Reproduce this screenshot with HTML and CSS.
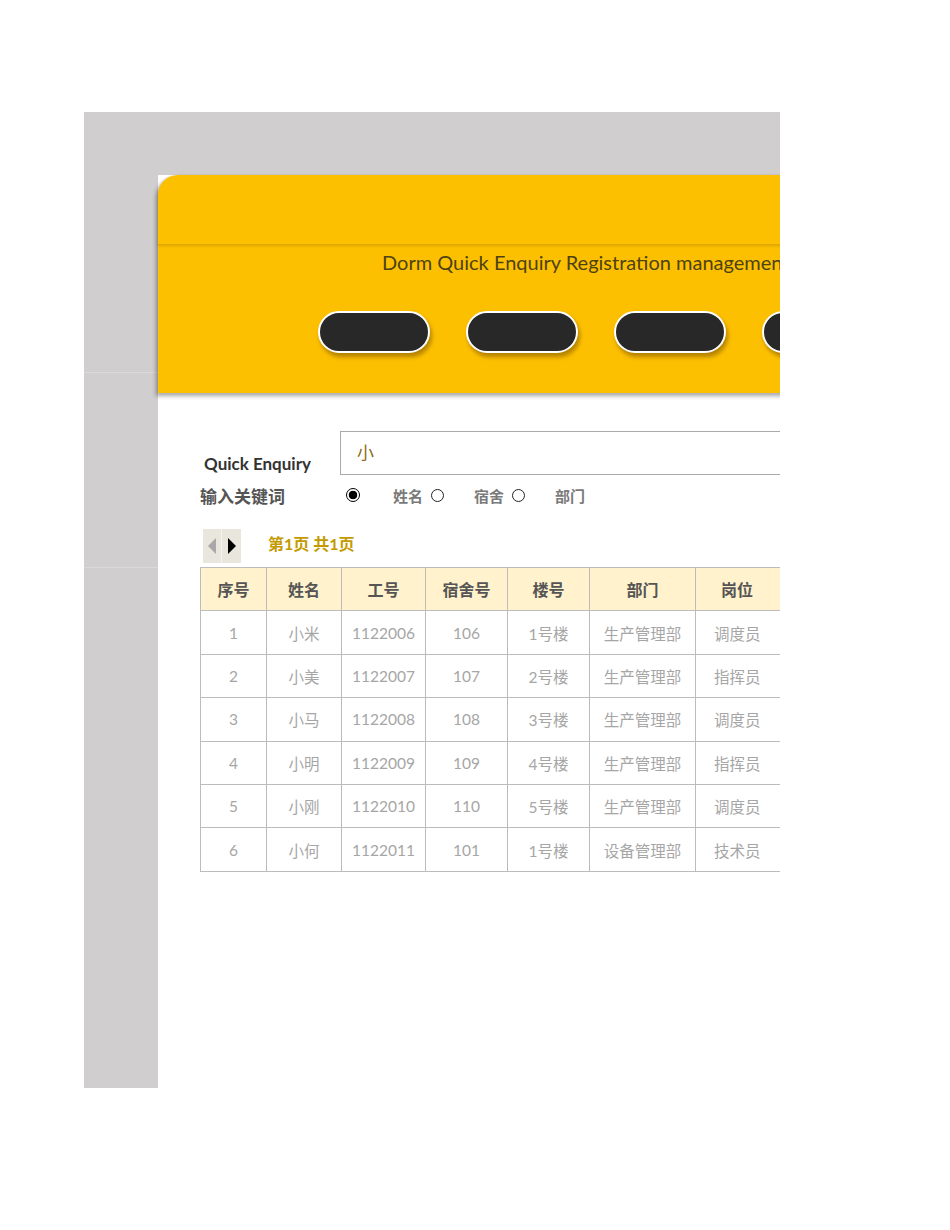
FILE: index.html
```html
<!DOCTYPE html>
<html>
<head>
<meta charset="utf-8">
<link rel="stylesheet" href="styles.css">
</head>
<body>
<div class="frame">
  <div class="panel">
    <div class="header">
      <div class="header-top"></div>
      <div class="header-bottom">
        <div class="title">Dorm Quick Enquiry Registration management system</div>
        <div class="pills">
          <div class="pill"></div>
          <div class="pill"></div>
          <div class="pill"></div>
          <div class="pill"></div>
        </div>
      </div>
    </div>
    <div class="content">
      <div class="search-row">
        <div class="search-label">Quick Enquiry</div>
        <div class="search-box">小</div>
      </div>
      <div class="radio-row">
        <div class="kw-label">输入关键词</div>
        <span class="radio on"></span>
        <span class="opt first">姓名</span>
        <span class="radio"></span>
        <span class="opt">宿舍</span>
        <span class="radio"></span>
        <span class="opt">部门</span>
      </div>
      <div class="pager-row">
        <div class="pager">
          <span class="half"><span class="tri-left"></span></span>
          <span class="half"><span class="tri-right"></span></span>
        </div>
        <div class="page-info">第1页 共1页</div>
      </div>
      <table class="grid">
        <colgroup>
          <col class="c1"><col class="c2"><col class="c3"><col class="c4"><col class="c5"><col class="c6"><col class="c7">
        </colgroup>
        <thead>
          <tr><th>序号</th><th>姓名</th><th>工号</th><th>宿舍号</th><th>楼号</th><th>部门</th><th>岗位</th></tr>
        </thead>
        <tbody>
          <tr><td>1</td><td>小米</td><td>1122006</td><td>106</td><td>1号楼</td><td>生产管理部</td><td>调度员</td></tr>
          <tr><td>2</td><td>小美</td><td>1122007</td><td>107</td><td>2号楼</td><td>生产管理部</td><td>指挥员</td></tr>
          <tr><td>3</td><td>小马</td><td>1122008</td><td>108</td><td>3号楼</td><td>生产管理部</td><td>调度员</td></tr>
          <tr><td>4</td><td>小明</td><td>1122009</td><td>109</td><td>4号楼</td><td>生产管理部</td><td>指挥员</td></tr>
          <tr><td>5</td><td>小刚</td><td>1122010</td><td>110</td><td>5号楼</td><td>生产管理部</td><td>调度员</td></tr>
          <tr><td>6</td><td>小何</td><td>1122011</td><td>101</td><td>1号楼</td><td>设备管理部</td><td>技术员</td></tr>
        </tbody>
      </table>
    </div>
  </div>
</div>
</body>
</html>
```

FILE: styles.css
```css
html, body {
  margin: 0;
  padding: 0;
  background: #ffffff;
  font-family: Lato, "Noto Sans CJK SC", sans-serif;
}
.frame {
  margin: 112px 0 0 84px;
  width: 696px;
  height: 976px;
  background-color: #d0cecf;
  background-image:
    linear-gradient(#dad8d9, #dad8d9),
    linear-gradient(#dad8d9, #dad8d9);
  background-size: 74px 1px, 74px 1px;
  background-position: 0 260px, 0 455px;
  background-repeat: no-repeat;
  overflow: hidden;
  padding: 63px 0 0 74px;
  box-sizing: border-box;
}
.panel {
  width: 900px;
  height: 913px;
  background: #ffffff;
}
.header {
  height: 218px;
  background: #fdc000;
  border-top-left-radius: 20px;
  box-shadow: -2px 3px 4px rgba(0, 0, 0, 0.35);
  position: relative;
}
.header-top {
  height: 69px;
  border-top-left-radius: 20px;
  border-bottom: 1px solid #e2aa00;
  box-shadow: 0 1px 3px rgba(160, 110, 0, 0.35);
}
.header-bottom {
  padding-top: 5px;
}
.title {
  padding-left: 224px;
  font-size: 20px;
  line-height: 24px;
  color: #4e4214;
  white-space: nowrap;
}
.pills {
  display: flex;
  gap: 36px;
  padding: 37px 0 0 160px;
}
.pill {
  width: 108px;
  height: 38px;
  border: 2px solid #ffffff;
  border-radius: 21px;
  background: #282828;
  flex: none;
  box-shadow: 2px 4px 4px rgba(120, 80, 0, 0.55);
}
.content {
  padding: 38px 0 0 42px;
}
.search-row {
  display: flex;
  align-items: flex-start;
}
.search-label {
  width: 140px;
  padding: 23px 0 0 4px;
  box-sizing: border-box;
  font-weight: bold;
  font-size: 17px;
  line-height: 20px;
  color: #333333;
}
.search-box {
  width: 600px;
  height: 44px;
  box-sizing: border-box;
  border: 1px solid #aaaaaa;
  padding: 11px 0 0 16px;
  font-size: 17px;
  line-height: 20px;
  color: #8a6a16;
}
.radio-row {
  display: flex;
  align-items: center;
  height: 24px;
  margin-top: 8px;
  font-size: 15px;
  font-weight: bold;
  color: #7a7a7a;
}
.kw-label {
  width: 144px;
  font-size: 17px;
  color: #555555;
}
.radio {
  width: 13px;
  height: 13px;
  border: 1px solid #222222;
  border-radius: 50%;
  box-sizing: border-box;
  flex: none;
  margin-left: 8px;
}
.radio.on {
  margin-left: 2px;
  width: 14px;
  height: 14px;
  border: 1.5px solid #000000;
  background: radial-gradient(circle, #000000 0 4px, #ffffff 4.6px);
}
.opt {
  margin-left: 30px;
}
.opt.first {
  margin-left: 33px;
}
.pager-row {
  display: flex;
  align-items: center;
  margin-top: 22px;
  padding-left: 3px;
}
.pager {
  display: flex;
  width: 38px;
  height: 34px;
  background: #e9e7dd;
}
.half {
  width: 19px;
  height: 34px;
  display: flex;
  align-items: center;
  justify-content: center;
}
.half:first-child {
  border-right: 1px solid #f4f3ee;
  box-sizing: border-box;
}
.tri-left {
  width: 0;
  height: 0;
  border-top: 8px solid transparent;
  border-bottom: 8px solid transparent;
  border-right: 8px solid #a8a8a8;
}
.tri-right {
  width: 0;
  height: 0;
  border-top: 8px solid transparent;
  border-bottom: 8px solid transparent;
  border-left: 8px solid #000000;
}
.page-info {
  margin-left: 27px;
  font-size: 16px;
  font-weight: bold;
  color: #c49a00;
  margin-top: -6px;
}
.grid {
  margin-top: 4px;
  border-collapse: collapse;
  table-layout: fixed;
  width: 700px;
}
.c1 { width: 66px; }
.c2 { width: 75px; }
.c3 { width: 84px; }
.c4 { width: 82px; }
.c5 { width: 82px; }
.c6 { width: 106px; }
.c7 { width: 205px; }
.grid tr {
  height: 43.4px;
}
.grid th, .grid td {
  border: 1px solid #bcbcbc;
  padding: 0;
  text-align: center;
  white-space: nowrap;
}
.grid th {
  background: #fff2cc;
  color: #555555;
  font-weight: bold;
  font-size: 16px;
}
.grid td {
  color: #a6a6a6;
  font-weight: normal;
  font-size: 15.5px;
}
.grid td:last-child {
  text-align: left;
  padding-left: 18px;
}
.grid th:last-child {
  text-align: left;
  padding-left: 25px;
}
```
